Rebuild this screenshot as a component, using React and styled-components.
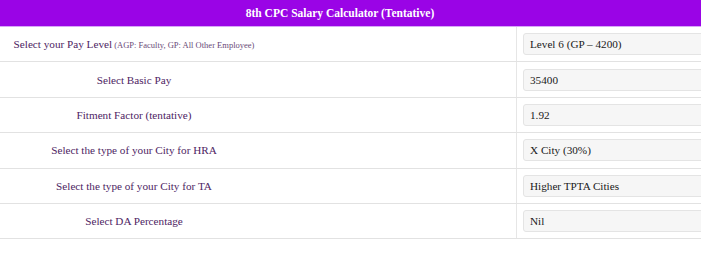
import React from "react";
import styled, { createGlobalStyle } from "styled-components";

const Global = createGlobalStyle`
  html, body { margin: 0; padding: 0; background: #fff; }
  body { overflow: hidden; font-family: "Liberation Serif", "DejaVu Serif", serif; }
`;

const Table = styled.div`
  width: 701px;
  overflow: hidden;
`;

const Header = styled.div`
  height: 26px;
  background: #9a04e6;
  border-bottom: 1px solid #d7a6f7;
  display: flex;
  align-items: center;
  justify-content: center;
  padding-right: 21px;
  color: #fff;
  font-weight: bold;
  font-size: 11.5px;
`;

const Row = styled.div`
  display: grid;
  grid-template-columns: 517px 1fr;
  border-bottom: 1px solid #e2e2e2;
  box-sizing: border-box;
  height: 35.4px;
`;

const Label = styled.div`
  border-right: 1px solid #e6e6e6;
  display: flex;
  align-items: center;
`;

const LabelText = styled.div`
  width: 268px;
  text-align: center;
  color: #4e2463;
  font-size: 11.2px;
`;

const Small = styled.span`
  font-size: 8.5px;
  color: #6a4a78;
`;

const Cell = styled.div`
  display: flex;
  align-items: center;
  padding-left: 6px;
  overflow: hidden;
`;

const SelectBox = styled.div`
  flex: 0 0 240px;
  height: 22px;
  box-sizing: border-box;
  background: #f6f6f6;
  border: 1px solid #e4e4e4;
  border-radius: 3px;
  display: flex;
  align-items: center;
  padding-left: 6px;
  color: #1a1a1a;
  font-size: 11.2px;
`;

const rows = [
  { label: "Select your Pay Level", small: "(AGP: Faculty, GP: All Other Employee)", value: "Level 6 (GP – 4200)" },
  { label: "Select Basic Pay", value: "35400" },
  { label: "Fitment Factor (tentative)", value: "1.92" },
  { label: "Select the type of your City for HRA", value: "X City (30%)" },
  { label: "Select the type of your City for TA", value: "Higher TPTA Cities" },
  { label: "Select DA Percentage", value: "Nil" },
];

export default function App() {
  return (
    <>
      <Global />
      <Table>
        <Header>8th CPC Salary Calculator (Tentative)</Header>
        {rows.map((r) => (
          <Row key={r.label}>
            <Label>
              <LabelText>
                {r.label}
                {r.small && <Small> {r.small}</Small>}
              </LabelText>
            </Label>
            <Cell>
              <SelectBox>{r.value}</SelectBox>
            </Cell>
          </Row>
        ))}
      </Table>
    </>
  );
}
